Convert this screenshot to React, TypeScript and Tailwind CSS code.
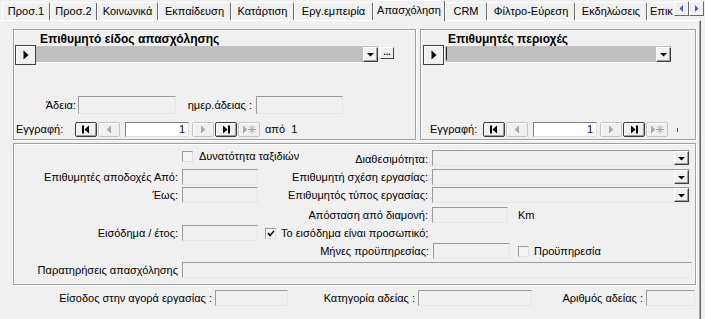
import type React from "react"

// Access-style form: "Απασχόληση" tab

const tabs = [
  { label: "Προσ.1", w: "w-[48px]" },
  { label: "Προσ.2", w: "w-[47px]" },
  { label: "Κοινωνικά", w: "w-[61px]" },
  { label: "Εκπαίδευση", w: "w-[73px]" },
  { label: "Κατάρτιση", w: "w-[63px]" },
  { label: "Εργ.εμπειρία", w: "w-[79px]" },
  { label: "Απασχόληση", w: "w-[72px]", active: true },
  { label: "CRM", w: "w-[42px]" },
  { label: "Φίλτρο-Εύρεση", w: "w-[88px]" },
  { label: "Εκδηλώσεις", w: "w-[72px]" },
]

function TabStrip() {
  return (
    <div className="flex items-end h-[20px] pl-[2px]">
      {tabs.map((t) =>
        t.active ? (
          <div
            key={t.label}
            className={`${t.w} h-[21px] -mb-px relative z-10 bg-[#f0f0f0] border-t border-l border-white border-r border-r-[#696969] rounded-t-[2px] text-center pt-[3px] leading-[12px] whitespace-nowrap`}
          >
            {t.label}
          </div>
        ) : (
          <div
            key={t.label}
            className={`${t.w} h-[18px] bg-[#f0f0f0] border-t border-l border-white border-r border-r-[#696969] rounded-t-[2px] flex items-center justify-center whitespace-nowrap`}
          >
            {t.label}
          </div>
        )
      )}
      <div className="w-[27px] h-[18px] bg-[#f0f0f0] border-t border-l border-white rounded-tl-[2px] flex items-center pl-[2px] whitespace-nowrap">
        Επικ
      </div>
      <div className="self-start mt-[1px] flex">
        <ScrollBtn dir="left" />
        <ScrollBtn dir="right" />
      </div>
    </div>
  )
}

function ScrollBtn({ dir }: { dir: "left" | "right" }) {
  return (
    <div className="w-[15px] h-[15px] bg-[#f0f0f0] border border-t-white border-l-white border-b-[#696969] border-r-[#696969] flex items-center justify-center">
      <svg width="5" height="7" viewBox="0 0 5 7">
        {dir === "left" ? (
          <polygon points="4,0 4,7 0.5,3.5" fill="#3a64c8" />
        ) : (
          <polygon points="1,0 1,7 4.5,3.5" fill="#3a64c8" />
        )}
      </svg>
    </div>
  )
}

// sunken text box
function Box({ className = "" }: { className?: string }) {
  return (
    <div
      className={`h-[16px] bg-[#f0f0f0] border border-t-[#9a9a9a] border-l-[#9a9a9a] border-b-[#e6e6e6] border-r-[#e6e6e6] ${className}`}
    />
  )
}

function DropArrow() {
  return (
    <div className="w-[15px] h-full bg-[#f0f0f0] border border-t-white border-l-white border-b-[#404040] border-r-[#404040] shadow-[inset_-1px_-1px_0_#a0a0a0] flex items-center justify-center">
      <svg width="7" height="5" viewBox="0 0 7 5">
        <polygon points="0,1 7,1 3.5,4.5" fill="#000" />
      </svg>
    </div>
  )
}

function Combo({ className = "" }: { className?: string }) {
  return (
    <div
      className={`h-[16px] bg-[#f0f0f0] border border-t-[#9a9a9a] border-l-[#9a9a9a] border-b-[#e6e6e6] border-r-[#e6e6e6] flex justify-end ${className}`}
    >
      <DropArrow />
    </div>
  )
}

function CheckBox({ checked = false }: { checked?: boolean }) {
  return (
    <div className="w-[11px] h-[11px] shrink-0 bg-[#f4f4f4] border border-t-[#9a9a9a] border-l-[#9a9a9a] border-b-[#e0e0e0] border-r-[#e0e0e0] flex items-center justify-center">
      {checked && (
        <svg width="8" height="7" viewBox="0 0 8 7">
          <polyline points="1,3 3,5.5 7,1" fill="none" stroke="#000" strokeWidth="1.6" />
        </svg>
      )}
    </div>
  )
}

type NavKind = "first" | "prev" | "next" | "last" | "new"

function NavBtn({ kind, enabled, className = "" }: { kind: NavKind; enabled: boolean; className?: string }) {
  const c = enabled ? "#000" : "#a8a8a8"
  return (
    <div
      className={`w-[22px] h-[15px] rounded-[2px] flex items-center justify-center ${
        enabled
          ? "border border-[#3c3c3c] bg-[#f0f0f0] shadow-[inset_1px_1px_0_#fff,inset_-1px_-1px_0_#a0a0a0]"
          : "border border-[#c4c4c4] bg-[#f0f0f0] shadow-[inset_1px_1px_0_#fff]"
      } ${className}`}
    >
      <svg width="16" height="11" viewBox="0 0 16 11">
        {kind === "first" && (
          <>
            <rect x="4" y="1.5" width="2" height="8" fill={c} />
            <polygon points="11,1.5 11,9.5 6.5,5.5" fill={c} />
          </>
        )}
        {kind === "prev" && <polygon points="10,1.5 10,9.5 5.5,5.5" fill={c} />}
        {kind === "next" && <polygon points="6,1.5 6,9.5 10.5,5.5" fill={c} />}
        {kind === "last" && (
          <>
            <polygon points="5,1.5 5,9.5 9.5,5.5" fill={c} />
            <rect x="10" y="1.5" width="2" height="8" fill={c} />
          </>
        )}
        {kind === "new" && (
          <>
            <polygon points="2,1.5 2,9.5 6.5,5.5" fill={c} />
            <g stroke={c} strokeWidth="1">
              <line x1="11" y1="1.5" x2="11" y2="9.5" />
              <line x1="7" y1="5.5" x2="15" y2="5.5" />
              <line x1="8.2" y1="2.7" x2="13.8" y2="8.3" />
              <line x1="13.8" y1="2.7" x2="8.2" y2="8.3" />
            </g>
          </>
        )}
      </svg>
    </div>
  )
}

function Navigator({ labelClass, tail }: { labelClass: string; tail: React.ReactNode }) {
  return (
    <div className="flex items-center h-[15px]">
      <div className={`${labelClass} whitespace-nowrap`}>Εγγραφή:</div>
      <NavBtn kind="first" enabled />
      <NavBtn kind="prev" enabled={false} className="ml-px" />
      <div className="ml-[5px] w-[64px] h-[15px] bg-white border border-t-[#808080] border-l-[#808080] border-b-[#e0e0e0] border-r-[#e0e0e0] text-right pr-[3px] leading-[13px] text-[#0a0a30]">
        1
      </div>
      <NavBtn kind="next" enabled={false} className="ml-[3px]" />
      <NavBtn kind="last" enabled className="ml-px" />
      <NavBtn kind="new" enabled={false} className="ml-px" />
      {tail}
    </div>
  )
}

function RecordSelector({ className = "" }: { className?: string }) {
  return (
    <div
      className={`w-[21px] h-[20px] bg-[#f0f0f0] border border-[#404040] shadow-[inset_1px_1px_0_#fff] flex items-center justify-center ${className}`}
    >
      <svg width="6" height="10" viewBox="0 0 6 10">
        <polygon points="0.5,0.5 0.5,9.5 5.5,5" fill="#000" />
      </svg>
    </div>
  )
}

const etched =
  "border border-[#a0a0a0] shadow-[inset_1px_1px_0_#fff,1px_1px_0_#fff]"

function DesiredJobs() {
  return (
    <div className={`w-[403px] h-[111px] ${etched}`}>
      <div className="h-[15px] leading-[19px] pl-[26px] font-bold text-[12px] whitespace-nowrap">
        Επιθυμητό είδος απασχόλησης
      </div>
      <div className="flex h-[20px]">
        <RecordSelector className="ml-px" />
        <div className="mt-px w-[342px] h-[16px] bg-[#c0c0c0] shadow-[0_1px_0_#fff] flex justify-end">
          <div className="h-[15px] mt-px">
            <DropArrow />
          </div>
        </div>
        <div className="ml-[2px] mt-[2px] w-[14px] h-[12px] bg-[#f0f0f0] border border-t-white border-l-white border-b-[#404040] border-r-[#404040] flex items-center justify-center text-[9px] leading-none font-bold pb-[2px]">
          ...
        </div>
      </div>
      <div className="flex items-center h-[18px] mt-[31px]">
        <div className="w-[64px] text-right pr-[2px]">Άδεια:</div>
        <Box className="w-[98px] h-[18px]" />
        <div className="w-[80px] text-right pr-[4px] whitespace-nowrap">ημερ.άδειας :</div>
        <Box className="w-[87px] h-[18px]" />
      </div>
      <div className="mt-[8px]">
        <Navigator
          labelClass="w-[61px] pl-[2px]"
          tail={<span className="ml-[5px] whitespace-nowrap">από&nbsp; 1</span>}
        />
      </div>
    </div>
  )
}

function DesiredAreas() {
  return (
    <div className={`w-[276px] h-[111px] ${etched}`}>
      <div className="h-[15px] leading-[19px] pl-[27px] font-bold text-[12px] whitespace-nowrap">
        Επιθυμητές περιοχές
      </div>
      <div className="flex h-[20px]">
        <RecordSelector className="ml-[2px]" />
        <div className="ml-px mt-px w-[226px] h-[16px] bg-[#c0c0c0] shadow-[0_1px_0_#fff] flex justify-between">
          <div className="w-px h-[13px] mt-px ml-px bg-[#202020]" />
          <div className="h-[15px] mt-px">
            <DropArrow />
          </div>
        </div>
      </div>
      <div className="mt-[57px]">
        <Navigator
          labelClass="w-[62px] pl-[9px]"
          tail={<span className="ml-[9px] w-px h-[4px] bg-[#a03020]" />}
        />
      </div>
    </div>
  )
}

function Row({ children, className = "" }: { children: React.ReactNode; className?: string }) {
  return <div className={`flex items-center h-[16px] ${className}`}>{children}</div>
}

function LeftLabel({ children }: { children?: React.ReactNode }) {
  return <div className="w-[168px] shrink-0 text-right pr-[4px] whitespace-nowrap">{children}</div>
}

function RightLabel({ children }: { children?: React.ReactNode }) {
  return <div className="w-[174px] shrink-0 text-right pr-[4px] whitespace-nowrap">{children}</div>
}

function Preferences() {
  return (
    <div className={`ml-[13px] mt-[3px] w-[683px] h-[142px] ${etched} pt-[6px]`}>
      <Row>
        <div className="w-[244px] shrink-0 flex items-center pl-[168px] whitespace-nowrap -mt-[3px]">
          <CheckBox />
          <span className="ml-[6px]">Δυνατότητα ταξιδιών</span>
        </div>
        <RightLabel>
          <span className="relative top-[1px]">Διαθεσιμότητα:</span>
        </RightLabel>
        <Combo className="w-[258px]" />
      </Row>
      <Row className="mt-[3px]">
        <LeftLabel>Επιθυμητές αποδοχές Από:</LeftLabel>
        <Box className="w-[76px]" />
        <RightLabel>Επιθυμητή σχέση εργασίας:</RightLabel>
        <Combo className="w-[258px]" />
      </Row>
      <Row className="mt-[2px]">
        <LeftLabel>Έως:</LeftLabel>
        <Box className="w-[76px]" />
        <RightLabel>Επιθυμητός τύπος εργασίας:</RightLabel>
        <Combo className="w-[258px]" />
      </Row>
      <Row className="mt-[4px]">
        <div className="w-[244px] shrink-0" />
        <RightLabel>Απόσταση από διαμονή:</RightLabel>
        <Box className="w-[76px]" />
        <span className="ml-[10px]">Km</span>
      </Row>
      <Row className="mt-[2px]">
        <LeftLabel>Εισόδημα / έτος:</LeftLabel>
        <Box className="w-[76px]" />
        <div className="ml-[7px]">
          <CheckBox checked />
        </div>
        <span className="ml-[5px] whitespace-nowrap">Το εισόδημα είναι προσωπικό;</span>
      </Row>
      <Row className="mt-[2px]">
        <div className="w-[246px] shrink-0" />
        <div className="w-[173px] shrink-0 text-right pr-[4px] whitespace-nowrap">Μήνες προϋπηρεσίας:</div>
        <Box className="w-[77px]" />
        <div className="ml-[8px]">
          <CheckBox />
        </div>
        <span className="ml-[5px]">Προϋπηρεσία</span>
      </Row>
      <Row className="mt-[3px]">
        <LeftLabel>Παρατηρήσεις απασχόλησης</LeftLabel>
        <Box className="w-[510px]" />
      </Row>
    </div>
  )
}

export default function App() {
  return (
    <div className="w-[705px] h-[319px] overflow-hidden bg-[#f0f0f0] text-black text-[11px] leading-none font-['Liberation_Sans',Arial,sans-serif]">
      <TabStrip />
      <div className="w-[701px] h-[299px] border-t border-white border-r border-r-[#696969] shadow-[inset_-1px_0_0_#a0a0a0]">
        <div className="flex ml-[13px] mt-[8px] gap-[4px]">
          <DesiredJobs />
          <DesiredAreas />
        </div>
        <Preferences />
        <div className="flex items-center h-[16px] mt-[5px]">
          <div className="w-[215px] text-right pr-[3px] whitespace-nowrap">Είσοδος στην αγορά εργασίας :</div>
          <Box className="w-[73px]" />
          <div className="w-[130px] text-right pr-[3px] whitespace-nowrap">Κατηγορία αδείας :</div>
          <Box className="w-[114px]" />
          <div className="w-[114px] text-right pr-[3px] whitespace-nowrap">Αριθμός αδείας :</div>
          <Box className="w-[49px]" />
        </div>
      </div>
    </div>
  )
}
